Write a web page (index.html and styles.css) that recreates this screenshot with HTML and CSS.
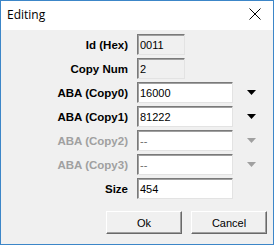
FILE: index.html
```html
<!DOCTYPE html>
<html>
<head>
<meta charset="utf-8">
<link rel="stylesheet" href="styles.css">
</head>
<body>
<div class="window">
  <div class="titlebar">
    <span class="title">Editing</span>
    <svg class="close" width="12" height="12" viewBox="0 0 12 12"><path d="M0.5 0.5 L11.5 11.5 M11.5 0.5 L0.5 11.5" stroke="#000" stroke-width="1" fill="none"/></svg>
  </div>
  <div class="content">
    <div class="form">
      <label class="lbl">Id (Hex)</label>
      <div class="box ro short">0011</div>
      <span></span>

      <label class="lbl">Copy Num</label>
      <div class="box ro short">2</div>
      <span></span>

      <label class="lbl">ABA (Copy0)</label>
      <div class="box">16000</div>
      <svg class="arrow" width="9" height="5" viewBox="0 0 9 5"><polygon points="0,0 9,0 4.5,5" fill="#000"/></svg>

      <label class="lbl">ABA (Copy1)</label>
      <div class="box">81222</div>
      <svg class="arrow" width="9" height="5" viewBox="0 0 9 5"><polygon points="0,0 9,0 4.5,5" fill="#000"/></svg>

      <label class="lbl dis">ABA (Copy2)</label>
      <div class="box dis">--</div>
      <svg class="arrow" width="9" height="5" viewBox="0 0 9 5"><polygon points="0,0 9,0 4.5,5" fill="#a0a0a0"/></svg>

      <label class="lbl dis">ABA (Copy3)</label>
      <div class="box dis">--</div>
      <svg class="arrow" width="9" height="5" viewBox="0 0 9 5"><polygon points="0,0 9,0 4.5,5" fill="#a0a0a0"/></svg>

      <label class="lbl">Size</label>
      <div class="box">454</div>
      <span></span>
    </div>
    <div class="buttons">
      <button class="btn">Ok</button>
      <button class="btn">Cancel</button>
    </div>
  </div>
</div>
</body>
</html>
```

FILE: styles.css
```css
html, body {
  margin: 0;
  padding: 0;
  background: #ffffff;
}
.window {
  width: 274px;
  height: 245px;
  box-sizing: border-box;
  border: 1px solid #3c86c8;
  background: #f0f0f0;
  display: flex;
  flex-direction: column;
  font-family: "Liberation Sans", Arial, sans-serif;
  font-size: 11px;
  color: #000;
}
.titlebar {
  height: 29px;
  background: #ffffff;
  display: flex;
  align-items: center;
  justify-content: space-between;
  padding: 0 12px 0 6px;
  flex: none;
}
.title {
  font-family: "Open Sans", "Noto Sans", sans-serif;
  font-size: 12px;
  color: #000;
  margin-top: -3px;
}
.close {
  margin-top: -3px;
}
.content {
  padding-top: 4px;
  display: flex;
  flex-direction: column;
}
.form {
  display: grid;
  grid-template-columns: 127px 96px 36px;
  column-gap: 9px;
  row-gap: 3px;
  grid-auto-rows: 21px;
  align-items: center;
}
.lbl {
  justify-self: end;
  font-weight: bold;
  font-size: 11.5px;
  color: #000;
}
.lbl.dis {
  color: #a0a0a0;
}
.box {
  height: 21px;
  box-sizing: border-box;
  border: 1px solid;
  border-color: #7a7a7a #e3e3e3 #e3e3e3 #7a7a7a;
  box-shadow: inset 1px 1px 0 #a0a0a0;
  background: #ffffff;
  padding: 3px 0 0 2px;
  line-height: 14px;
  font-size: 11px;
  white-space: nowrap;
}
.box.ro {
  background: #f0f0f0;
}
.box.short {
  width: 48px;
}
.box.dis {
  color: #6d6d6d;
}
.arrow {
  justify-self: start;
  margin-left: 5px;
}
.buttons {
  display: flex;
  gap: 9px;
  padding-left: 105px;
  margin-top: 12px;
}
.btn {
  width: 76px;
  height: 23px;
  box-sizing: border-box;
  font-family: "Liberation Sans", Arial, sans-serif;
  font-size: 11px;
  color: #000;
  background: #f0f0f0;
  border: 1px solid;
  border-color: #ffffff #696969 #696969 #ffffff;
  box-shadow: inset -1px -1px 0 #a0a0a0;
  padding: 0;
}
```
